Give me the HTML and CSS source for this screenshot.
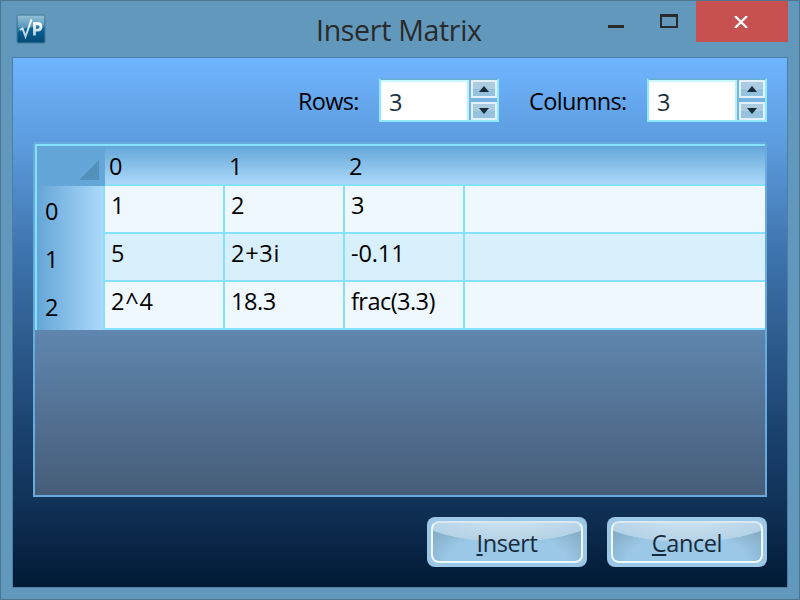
FILE: index.html
```html
<!DOCTYPE html>
<html lang="en">
<head>
<meta charset="utf-8">
<title>Insert Matrix</title>
<link rel="stylesheet" href="styles.css">
</head>
<body>
<div class="window">
  <header class="titlebar">
    <svg class="app-icon" width="30" height="30" viewBox="0 0 30 30">
      <defs>
        <linearGradient id="app" x1="0" y1="0" x2="0" y2="1"><stop offset="0" stop-color="#7fb3cf"/><stop offset=".42" stop-color="#3583ae"/><stop offset=".48" stop-color="#07639a"/><stop offset="1" stop-color="#044a76"/></linearGradient>
        <linearGradient id="ink" x1="0" y1="0" x2="0" y2="1"><stop offset="0" stop-color="#fff"/><stop offset="1" stop-color="#b4cad8"/></linearGradient>
      </defs>
      <rect x="1" y="1" width="28" height="28" rx="1.5" fill="url(#app)" stroke="#477b99"/>
      <path d="M2 2H28V11Q12 12 2 18Z" fill="#fff" opacity=".18"/>
      <path d="M4 16L6.5 14.5L9.5 22.5L15.5 5.500" fill="none" stroke="url(#ink)" stroke-width="2"/>
      <path d="M18.500 21.500V9.500H21.500Q25 9.500 25 12.800T21.500 16.200H19" fill="none" stroke="url(#ink)" stroke-width="2.800"/>
    </svg>
    <h1>Insert Matrix</h1>
    <div class="controls">
      <svg class="min" width="16" height="3"><rect width="16" height="3" fill="#2a2a2a"/></svg>
      <svg class="max" width="18" height="14"><path d="M0 0H18V14H0ZM2 3V12H16V3Z" fill="#2a2a2a" fill-rule="evenodd"/></svg>
      <div class="close"><svg width="14" height="12" viewBox="0 0 14 12"><path d="M1 0L13 12M13 0L1 12" stroke="#fff" stroke-width="2.300"/></svg></div>
    </div>
  </header>
  <main>
    <div class="fields">
      <label class="rows">Rows:</label>
      <div class="spinner"><div class="value">3</div><div class="arrows"><div class="arrow"><svg width="10" height="6"><path d="M0 6L5 0L10 6Z"/></svg></div><div class="arrow"><svg width="10" height="6"><path d="M0 0H10L5 6Z"/></svg></div></div></div>
      <label class="cols">Columns:</label>
      <div class="spinner"><div class="value">3</div><div class="arrows"><div class="arrow"><svg width="10" height="6"><path d="M0 6L5 0L10 6Z"/></svg></div><div class="arrow"><svg width="10" height="6"><path d="M0 0H10L5 6Z"/></svg></div></div></div>
    </div>
    <div class="panel">
      <div class="table">
        <div class="side">
          <div class="corner"><svg width="20" height="20"><path d="M20 0V20H0Z" fill="#5391bc"/></svg></div>
          <div class="heads"><div>0</div><div>1</div><div>2</div></div>
        </div>
        <div class="data">
          <div class="columns"><div>0</div><div>1</div><div>2</div></div>
          <div class="row"><div>1</div><div>2</div><div>3</div><div></div></div>
          <div class="row"><div>5</div><div class="complex">2+3i</div><div class="dec">-0.11</div><div></div></div>
          <div class="row"><div class="power">2^4</div><div>18.3</div><div class="frac">frac(3.3)</div><div></div></div>
        </div>
      </div>
    </div>
    <div class="actions">
      <div class="button"><div class="face"><span><u>I</u>nsert</span></div></div>
      <div class="button"><div class="face"><span><u>C</u>ancel</span></div></div>
    </div>
  </main>
</div>
</body>
</html>
```
FILE: styles.css
```css
* { box-sizing: border-box; }
body { margin: 0; font: 23.5px/32px "Open Sans", "Noto Sans", sans-serif; letter-spacing: -.4px; color: #000; }
svg { display: block; }
.window { width: 800px; height: 600px; background: #6198bb; border: 1px solid #4c7691; padding: 0 11px; overflow: hidden; }
.titlebar { height: 56px; display: flex; align-items: flex-start; }
.app-icon { margin: 13px 0 0 4px; flex: none; }
h1 { margin: 9px 0 0 270px; width: 199px; font-size: 28.5px; line-height: 40px; font-weight: 400; letter-spacing: -.3px; color: #2a2a2a; white-space: nowrap; }
.controls { display: flex; align-items: flex-start; margin-left: 93px; }
.min { margin-top: 24px; }
.max { margin: 13px 18px 0 36px; }
.close { width: 92px; height: 41px; background: #c75050; display: flex; align-items: center; justify-content: center; padding-right: 2px; }
main { height: 531px; border: 1px solid #4b7fa8; background: linear-gradient(#6fb5ff, #5b9adc 17%, #3e73ac 37%, #1b436f 70%, #12335a 83%, #001a34); padding: 20px 20px 0; }
.fields { display: flex; height: 44px; line-height: 46px; }
.rows { margin-left: 265px; width: 81px; letter-spacing: -.7px; }
.cols { margin-left: 30px; width: 118px; letter-spacing: -.65px; }
.spinner { width: 120px; height: 44px; border: 2px solid #8feaff; border-top-color: #68afd9; display: flex; background: #76b5df; }
.value { width: 88px; padding-left: 8px; line-height: 40px; color: #18303f; background: #fff; border-top: 2px solid #c8f7ff; border-right: 2px solid #b5f2ff; }
.arrows { margin-left: 2px; display: grid; gap: 4px; grid-template-rows: 18px 18px; }
.arrow { width: 26px; height: 18px; border: 2px solid #e3effa; background: linear-gradient(#abcbe0 50%, #94c2df 50%); display: grid; place-items: center; }
.arrow path { fill: #172c38; }
.panel { margin-top: 20px; height: 355px; border: 2px solid #68aadb; background: linear-gradient(#719cc5, #6087b0 52%, #465d78); }
.table { width: 730px; height: 186px; display: flex; border-top: 2px solid #84e2ff; border-left: 2px solid #84e2ff; }
.side { width: 68px; }
.corner { height: 40px; padding: 14px 0 0 42px; background: #64a6d8; }
.heads { height: 144px; background: linear-gradient(90deg, #64a6d8, #acd9fa); border-right: 2px solid #84e2ff; }
.heads div { height: 48px; padding: 9px 0 0 8px; }
.data { flex: 1; }
.columns { height: 40px; display: grid; grid-template-columns: 120px 120px 1fr; line-height: 40px; background: linear-gradient(#64a6d8, #acd9fa); border-bottom: 2px solid #84e2ff; padding-left: 4px; }
.row { height: 48px; display: grid; grid-template-columns: 120px 120px 120px 1fr; background: #eff7ff; border-bottom: 2px solid #84e2ff; }
.row:nth-child(3) { background: #d8effc; }
.row div { padding: 3px 0 0 6px; border-right: 2px solid #84e2ff; white-space: nowrap; }
.row div:last-child { border: 0; }
.row .complex { letter-spacing: .7px; }
.row .dec { letter-spacing: -.1px; }
.row .power { letter-spacing: .8px; }
.row .frac { letter-spacing: -.55px; }
.actions { display: flex; justify-content: flex-end; gap: 20px; margin-top: 20px; }
.button { width: 160px; height: 50px; border-radius: 8px; padding: 4px; background: #9bc8e7; }
.face { height: 42px; border: 2px solid #f0f8ff; border-top-color: #dce8f0; border-radius: 8px; text-align: center; line-height: 40px; color: #172b3b; background: radial-gradient(ellipse 92px 25px at 50% -6px, transparent 97%, #9ac8e600 100%), radial-gradient(ellipse 92px 27px at 50% -8px, #d2e6f3 0, #b5d2e6 98%, transparent 100%), radial-gradient(ellipse 90px 42px at 50% 100%, #9ac8e6 65%, #86afca 100%); }
.face u { text-decoration-thickness: 2px; text-underline-offset: 2px; }
```
